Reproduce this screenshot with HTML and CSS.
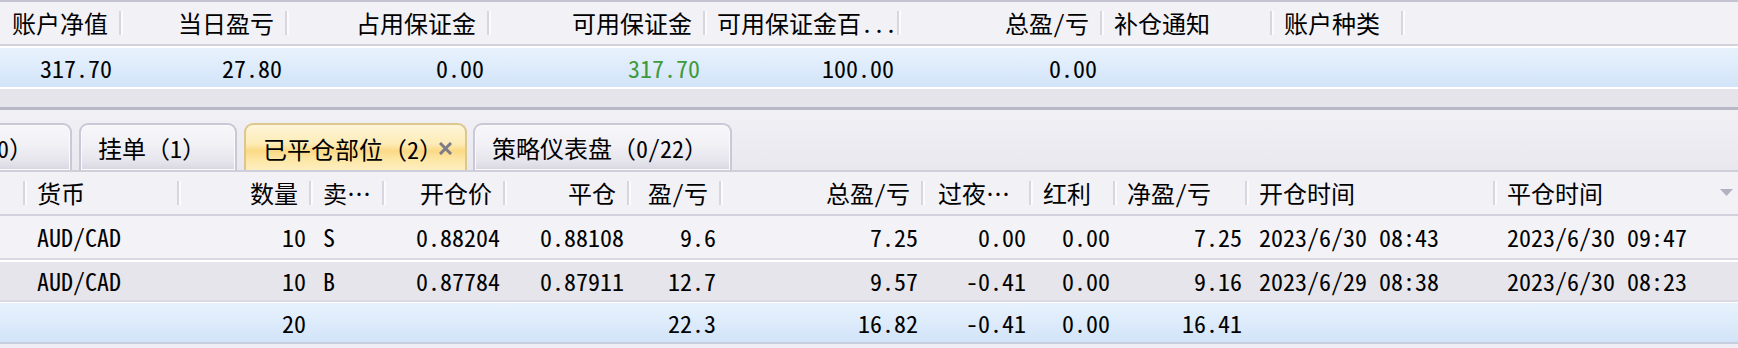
FILE: index.html
```html
<!DOCTYPE html>
<html lang="zh-CN">
<head>
  <meta charset="UTF-8" />
  <title>账户</title>
  <link rel="stylesheet" href="styles.css">
</head>
<body>

  <!-- account summary -->
  <div class="summary">
    <div class="sum-cols head">
      <div class="hc r"><span>账户净值</span></div>
      <div class="hc r"><span>当日盈亏</span></div>
      <div class="hc r"><span>占用保证金</span></div>
      <div class="hc r"><span>可用保证金</span></div>
      <div class="hc tight"><span>可用保证金百...</span></div>
      <div class="hc r"><span>总盈/亏</span></div>
      <div class="hc"><span>补仓通知</span></div>
      <div class="hc"><span>账户种类</span></div>
      <div class="hc last"></div>
    </div>
    <div class="sum-cols row blue">
      <div class="dc r">317.70</div>
      <div class="dc r">27.80</div>
      <div class="dc r">0.00</div>
      <div class="dc r green">317.70</div>
      <div class="dc r">100.00</div>
      <div class="dc r">0.00</div>
      <div class="dc"></div>
      <div class="dc"></div>
      <div class="dc"></div>
    </div>
  </div>

  <div class="splitter"></div>

  <!-- tabs -->
  <div class="tabstrip">
    <div class="tab first">持仓部位（0）</div>
    <div class="tab t2">挂单（1）</div>
    <div class="tab active">已平仓部位（2）
      <svg class="close" width="13" height="13" viewBox="0 0 13 13">
        <path d="M2 2 L11 11 M11 2 L2 11" stroke="#7c7b8a" stroke-width="3" stroke-linecap="square"/>
      </svg>
    </div>
    <div class="tab t4">策略仪表盘（0/22）</div>
  </div>

  <!-- closed positions -->
  <div class="orders">
    <div class="ord-cols head">
      <div class="hc"></div>
      <div class="hc"><span>货币</span></div>
      <div class="hc r"><span>数量</span></div>
      <div class="hc"><span>卖…</span></div>
      <div class="hc r"><span>开仓价</span></div>
      <div class="hc r"><span>平仓</span></div>
      <div class="hc r"><span>盈/亏</span></div>
      <div class="hc r"><span>总盈/亏</span></div>
      <div class="hc wide"><span>过夜…</span></div>
      <div class="hc"><span>红利</span></div>
      <div class="hc"><span>净盈/亏</span></div>
      <div class="hc"><span>开仓时间</span></div>
      <div class="hc last">
        <span>平仓时间</span>
        <svg width="13" height="8" viewBox="0 0 13 8"><path d="M0 0 H13 L6.5 7 Z" fill="#b2b1c0"/></svg>
      </div>
    </div>

    <div class="ord-cols row r1">
      <div class="dc"></div>
      <div class="dc">AUD/CAD</div>
      <div class="dc r">10</div>
      <div class="dc">S</div>
      <div class="dc r">0.88204</div>
      <div class="dc r">0.88108</div>
      <div class="dc r">9.6</div>
      <div class="dc r">7.25</div>
      <div class="dc r">0.00</div>
      <div class="dc r">0.00</div>
      <div class="dc r">7.25</div>
      <div class="dc">2023/6/30 08:43</div>
      <div class="dc">2023/6/30 09:47</div>
    </div>

    <div class="ord-cols row r2">
      <div class="dc"></div>
      <div class="dc">AUD/CAD</div>
      <div class="dc r">10</div>
      <div class="dc">B</div>
      <div class="dc r">0.87784</div>
      <div class="dc r">0.87911</div>
      <div class="dc r">12.7</div>
      <div class="dc r">9.57</div>
      <div class="dc r">-0.41</div>
      <div class="dc r">0.00</div>
      <div class="dc r">9.16</div>
      <div class="dc">2023/6/29 08:38</div>
      <div class="dc">2023/6/30 08:23</div>
    </div>

    <div class="ord-cols row blue total">
      <div class="dc"></div>
      <div class="dc"></div>
      <div class="dc r">20</div>
      <div class="dc"></div>
      <div class="dc"></div>
      <div class="dc"></div>
      <div class="dc r">22.3</div>
      <div class="dc r">16.82</div>
      <div class="dc r">-0.41</div>
      <div class="dc r">0.00</div>
      <div class="dc r">16.41</div>
      <div class="dc"></div>
      <div class="dc"></div>
    </div>
  </div>

</body>
</html>
```

FILE: styles.css
```css
* {
  margin: 0;
  padding: 0;
  box-sizing: border-box;
}

body {
  background: #efeef4;
  color: #000;
  font-family: "Noto Sans Mono CJK SC", "Noto Sans CJK SC", monospace;
  font-size: 24px;
  line-height: 1.5;
  overflow: hidden;
  height: 348px;
}

/* column layouts */
.sum-cols {
  display: grid;
  grid-template-columns: 117px 170px 202px 216px 194px 203px 170px 131px 1fr;
}

.ord-cols {
  display: grid;
  grid-template-columns: 25px 154px 132px 70px 124px 124px 92px 202px 108px 84px 132px 248px 1fr;
}

/* headers */
.summary {
  border-top: 2px solid #c4c3d1;
}

.head {
  background: #f2f1f6;
  height: 44px;
  border-bottom: 2px solid #d2d1dc;
}

.hc {
  display: flex;
  align-items: center;
  padding-left: 12px;
  min-width: 0;
}

.hc span {
  flex: 1;
  white-space: nowrap;
}

.hc.r span {
  text-align: right;
}

.hc.wide {
  padding-left: 15px;
}

.hc::after {
  content: "";
  flex: none;
  width: 2px;
  height: 24px;
  margin-left: 11px;
  background: #d8d7e1;
  box-shadow: 2px 0 0 #fbfbfd;
}

.hc.tight::after {
  margin-left: 0;
}

.hc.last {
  padding-right: 5px;
}

.hc.last::after {
  display: none;
}

/* data rows */
.row {
  display: grid;
  align-items: center;
}

.dc {
  padding: 0 5px 0 12px;
  white-space: nowrap;
}

.dc.r {
  text-align: right;
}

.green {
  color: #3f9a3a;
}

.blue {
  background: linear-gradient(to bottom, #e8f2fd, #d2e4f9);
}

.summary .row {
  height: 43px;
  border-top: 2px solid #fff;
  border-bottom: 2px solid #fff;
}

.splitter {
  height: 21px;
  background: #e4e4ea;
  border-bottom: 3px solid #b9b8c7;
}

/* tabs */
.tabstrip {
  display: flex;
  align-items: flex-end;
  height: 62px;
  background: linear-gradient(to bottom, #f1f0f5, #e9e8ef);
  border-bottom: 2px solid #cfcedb;
  overflow: hidden;
}

.tab {
  display: flex;
  align-items: center;
  flex: none;
  height: 49px;
  margin-bottom: -2px;
  margin-right: 7px;
  padding-left: 17px;
  white-space: nowrap;
  border: 2px solid #c9c8d7;
  border-bottom-color: #c1c0ce;
  border-radius: 9px 9px 0 0;
  background: linear-gradient(to bottom, #f7f7fa 0%, #f1f0f5 45%, #e6e5ec 80%, #d8d7e1 100%);
  box-shadow: inset 0 0 0 1px #fbfbfd;
}

.tab.first {
  width: 211px;
  margin-left: -139px;
  padding-left: 0;
  justify-content: flex-end;
  padding-right: 37px;
}

.tab.t2 {
  width: 158px;
}

.tab.active {
  width: 223px;
  margin-right: 6px;
  border-color: #dcc88f;
  border-bottom: none;
  background: linear-gradient(to bottom, #fef5d9 0%, #fdecb7 40%, #fbd985 55%, #fde6a3 72%, #fef0c6 100%);
  box-shadow: none;
}

.tab .close {
  margin-left: -4px;
}

.tab.t4 {
  width: 259px;
}

/* order grid rows */
.orders .head {
  height: 44px;
}

.orders .row {
  height: 42px;
  border-bottom: 2px solid #dbdae4;
}

.r1 {
  background: #f3f2f7;
  height: 44px !important;
}

.r2 {
  background: #e6e5eb;
  border-top: 2px solid #fff;
}

.total {
  border-top: 1px solid #fff;
  border-bottom-color: #c7cfde !important;
}
```
